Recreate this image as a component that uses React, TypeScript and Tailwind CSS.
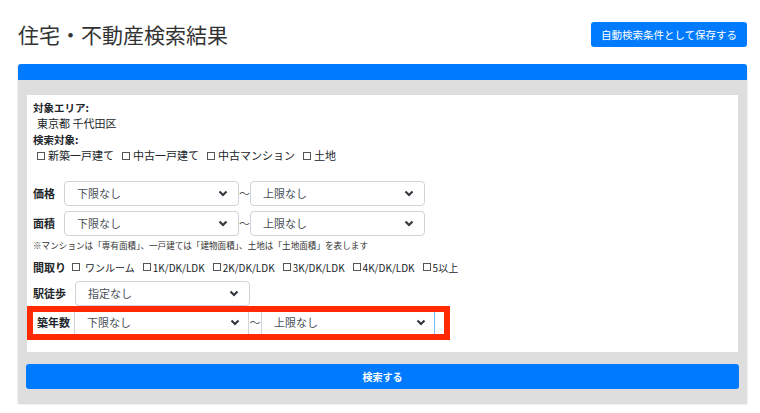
import React from "react";

const font = { fontFamily: '"Noto Sans CJK JP", "Noto Sans", sans-serif' };

function Chevron() {
  return (
    <svg width="10" height="7" viewBox="0 0 10 7" className="shrink-0">
      <path d="M1.5 1.5 L5 5 L8.5 1.5" fill="none" stroke="#343a40" strokeWidth="2.2" />
    </svg>
  );
}

function Select({ label, width = "w-[175px]" }: { label: string; width?: string }) {
  return (
    <div
      className={`flex h-[25px] ${width} items-center justify-between rounded-[4px] border border-[#ced4da] bg-white pl-3 pr-2.5 text-[11px] text-[#495057]`}
    >
      <span>{label}</span>
      <Chevron />
    </div>
  );
}

function Box({ label, gap = "gap-[3px]" }: { label: string; gap?: string }) {
  return (
    <span className={`inline-flex items-center ${gap}`}>
      <span className="inline-block h-[8px] w-[8px] border border-[#555]" />
      <span>{label}</span>
    </span>
  );
}

export default function App() {
  return (
    <div className="h-[413px] w-[760px] bg-white text-[#212529]" style={font}>
      <div className="flex items-center justify-between pl-[18px] pr-[13px] pt-[22px]">
        <h1 className="text-[21px] leading-[25px] text-[#333]">住宅・不動産検索結果</h1>
        <button className="h-[25px] w-[156px] rounded-[3px] bg-[#007bff] text-[10.5px] text-white">
          自動検索条件として保存する
        </button>
      </div>

      <div className="mx-[18px] mt-[17px] w-[729px] overflow-hidden rounded-t-[3px] bg-[#dedede] shadow-[0_1px_2px_rgba(0,0,0,0.2)]">
        <div className="h-[16px] bg-[#007bff]" />
        <div className="px-[8px] pt-[15px] pb-[14px]">
          <div className="ml-[1px] mr-[1px] h-[257px] bg-white px-[6px] pt-[5px]">
            <div className="text-[10.5px] font-bold leading-[15px]">対象エリア:</div>
            <div className="pl-[4px] text-[11px] leading-[17px]">東京都 千代田区</div>
            <div className="text-[10.5px] font-bold leading-[15px]">検索対象:</div>
            <div className="flex gap-[8px] pl-[4px] text-[11px] leading-[17px]">
              <Box label="新築一戸建て" gap="gap-[3px]" />
              <Box label="中古一戸建て" gap="gap-[3px]" />
              <Box label="中古マンション" gap="gap-[3px]" />
              <Box label="土地" gap="gap-[3px]" />
            </div>

            <div className="mt-[17px] flex items-center">
              <span className="w-[31px] text-[11px] font-bold">価格</span>
              <Select label="下限なし" />
              <span className="w-[11px] text-center text-[11px] text-[#555]">〜</span>
              <Select label="上限なし" />
            </div>
            <div className="mt-[5px] flex items-center">
              <span className="w-[31px] text-[11px] font-bold">面積</span>
              <Select label="下限なし" />
              <span className="w-[11px] text-center text-[11px] text-[#555]">〜</span>
              <Select label="上限なし" />
            </div>
            <div className="mt-[2px] whitespace-nowrap text-[8.6px] leading-[14px] text-[#333]">
              ※マンションは「専有面積」、一戸建ては「建物面積」、土地は「土地面積」を表します
            </div>
            <div className="mt-[7px] flex items-center gap-[8px] text-[10px]">
              <span className="mr-[-2px] text-[11px] font-bold">間取り</span>
              <Box label="ワンルーム" gap="gap-[5px]" />
              <Box label="1K/DK/LDK" gap="gap-[2px]" />
              <Box label="2K/DK/LDK" gap="gap-[2px]" />
              <Box label="3K/DK/LDK" gap="gap-[2px]" />
              <Box label="4K/DK/LDK" gap="gap-[2px]" />
              <Box label="5以上" gap="gap-[2px]" />
            </div>
            <div className="mt-[5px] flex items-center">
              <span className="w-[42px] text-[11px] font-bold">駅徒歩</span>
              <Select label="指定なし" />
            </div>

            <div className="-ml-[6px] w-[423px] border-[6px] border-[#ff2a00] bg-white">
              <div className="flex h-[22px] items-stretch text-[11px]">
                <span className="flex w-[42px] items-center justify-center border-r border-[#ced4da] font-bold">築年数</span>
                <div className="flex w-[174px] items-center justify-between border-r border-[#ced4da] pl-3 pr-2 text-[#495057]">
                  <span>下限なし</span>
                  <Chevron />
                </div>
                <span className="flex w-[12px] items-center justify-center text-[#555]">〜</span>
                <div className="flex w-[174px] items-center justify-between border-x border-l-[#ced4da] border-r-[#80bdff] pl-3 pr-2 text-[#495057]">
                  <span>上限なし</span>
                  <Chevron />
                </div>
                <span className="flex-1" />
              </div>
            </div>
          </div>

          <button className="mt-[12px] h-[25px] w-full rounded-[3px] bg-[#007bff] text-[10px] font-bold text-white">
            検索する
          </button>
        </div>
      </div>
    </div>
  );
}
